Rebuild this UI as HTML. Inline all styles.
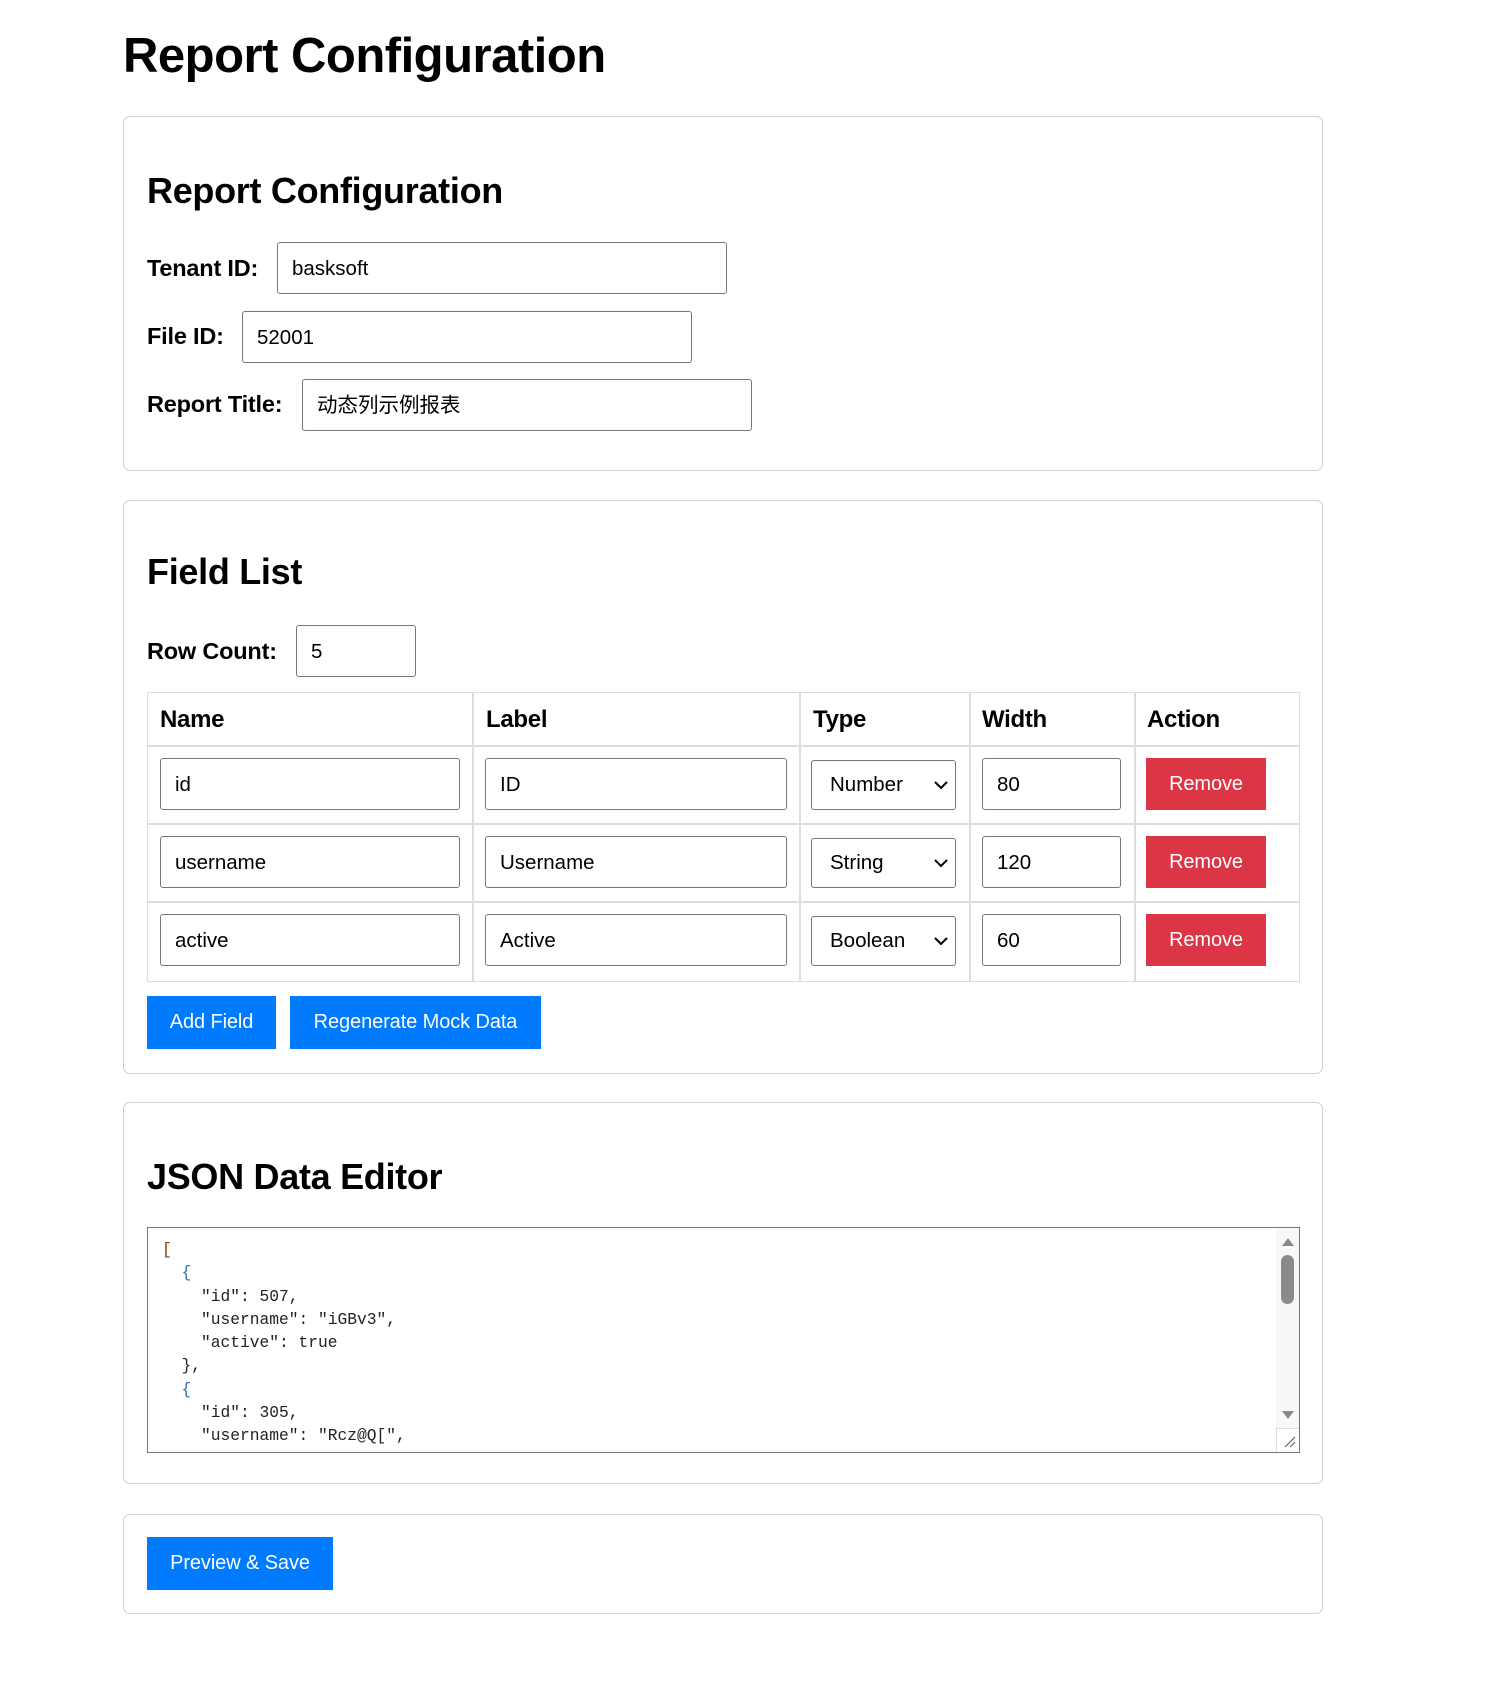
<!DOCTYPE html>
<html><head><meta charset="utf-8"><style>
*{box-sizing:border-box;margin:0;padding:0}
body{width:1493px;height:1707px;background:#fff;position:relative;font-family:"Liberation Sans","Noto Sans CJK SC",sans-serif;color:#000;overflow:hidden}
.a{position:absolute}
.h1{font-size:49px;font-weight:bold;left:123px;top:28px;line-height:56px;letter-spacing:-0.5px}
.card{position:absolute;left:123px;width:1200px;border:1.5px solid #d0d0d0;border-radius:7px}
.h2{position:absolute;left:147px;font-size:36px;font-weight:bold;line-height:40px;letter-spacing:-0.3px}
.lbl{position:absolute;left:147px;font-size:23.5px;font-weight:bold;line-height:28px;letter-spacing:-0.2px}
.in{position:absolute;border:1.5px solid #767676;border-radius:3px;font-size:20.5px;line-height:26px;padding:13px 14px 11px;height:52px;background:#fff}
.th{position:absolute;font-size:24px;font-weight:bold;line-height:28px;letter-spacing:-0.3px}
.hl{position:absolute;background:#ddd}
.btn{position:absolute;color:#fff;font-size:20px;text-align:center;line-height:53px;height:53px;letter-spacing:-0.1px}
.blue{background:#007bff}.red{background:#dc3545;height:52px;line-height:52px;width:120px}
.sel{position:absolute;border:1.5px solid #767676;border-radius:3px;width:145px;height:50px;font-size:20.5px;line-height:24px;padding:12px 18px}
.sel svg{position:absolute;right:7px;top:19px}
pre{position:absolute;left:14px;top:10px;font-family:"Liberation Mono",monospace;font-size:16.25px;line-height:23.3px;color:#222}
</style></head><body>
<div class="a h1">Report Configuration</div>

<div class="card" style="top:116px;height:355px"></div>
<div class="h2" style="top:171px">Report Configuration</div>
<div class="lbl" style="top:254px">Tenant ID:</div>
<div class="in" style="left:277px;top:242px;width:450px">basksoft</div>
<div class="lbl" style="top:322px">File ID:</div>
<div class="in" style="left:242px;top:311px;width:450px">52001</div>
<div class="lbl" style="top:390px">Report Title:</div>
<div class="in" style="left:302px;top:379px;width:450px">动态列示例报表</div>

<div class="card" style="top:500px;height:574px"></div>
<div class="h2" style="top:552px">Field List</div>
<div class="lbl" style="top:637px">Row Count:</div>
<div class="in" style="left:296px;top:625px;width:120px">5</div>

<div class="a" style="left:147px;top:692px;width:1153px;height:290px;border:1.5px solid #ddd"></div>
<div class="hl" style="left:147px;top:745px;width:1153px;height:1.5px"></div>
<div class="hl" style="left:147px;top:823px;width:1153px;height:1.5px"></div>
<div class="hl" style="left:147px;top:901px;width:1153px;height:1.5px"></div>
<div class="hl" style="left:472px;top:692px;width:1.5px;height:290px"></div>
<div class="hl" style="left:799px;top:692px;width:1.5px;height:290px"></div>
<div class="hl" style="left:969px;top:692px;width:1.5px;height:290px"></div>
<div class="hl" style="left:1134px;top:692px;width:1.5px;height:290px"></div>
<div class="th" style="left:160px;top:706px">Name</div>
<div class="th" style="left:486px;top:706px">Label</div>
<div class="th" style="left:813px;top:706px">Type</div>
<div class="th" style="left:982px;top:706px">Width</div>
<div class="th" style="left:1147px;top:706px">Action</div>

<div class="in" style="left:160px;top:758px;width:300px">id</div>
<div class="in" style="left:485px;top:758px;width:302px">ID</div>
<div class="sel" style="left:811px;top:760px">Number<svg width="14" height="10"><path d="M1 2l6 6 6-6" stroke="#000" stroke-width="2" fill="none"/></svg></div>
<div class="in" style="left:982px;top:758px;width:139px">80</div>
<div class="btn red" style="left:1146px;top:758px">Remove</div>

<div class="in" style="left:160px;top:836px;width:300px">username</div>
<div class="in" style="left:485px;top:836px;width:302px">Username</div>
<div class="sel" style="left:811px;top:838px">String<svg width="14" height="10"><path d="M1 2l6 6 6-6" stroke="#000" stroke-width="2" fill="none"/></svg></div>
<div class="in" style="left:982px;top:836px;width:139px">120</div>
<div class="btn red" style="left:1146px;top:836px">Remove</div>

<div class="in" style="left:160px;top:914px;width:300px">active</div>
<div class="in" style="left:485px;top:914px;width:302px">Active</div>
<div class="sel" style="left:811px;top:916px">Boolean<svg width="14" height="10"><path d="M1 2l6 6 6-6" stroke="#000" stroke-width="2" fill="none"/></svg></div>
<div class="in" style="left:982px;top:914px;width:139px">60</div>
<div class="btn red" style="left:1146px;top:914px">Remove</div>

<div class="btn blue" style="left:147px;top:996px;width:129px">Add Field</div>
<div class="btn blue" style="left:290px;top:996px;width:251px">Regenerate Mock Data</div>

<div class="card" style="top:1102px;height:382px"></div>
<div class="h2" style="top:1157px">JSON Data Editor</div>
<div class="a" style="left:147px;top:1227px;width:1153px;height:226px;border:1.5px solid #767676;overflow:hidden;background:#fff">
<pre><span style="color:#8a3a00">[</span>
  <span style="color:#2a6fb0">{</span>
    "id": 507,
    "username": "iGBv3",
    "active": true
  },
  <span style="color:#2a6fb0">{</span>
    "id": 305,
    "username": "Rcz@Q[",
    "active": false</pre>
<div class="a" style="left:1128px;top:0;width:23px;height:224px;background:#f8f8f8"></div>
<div class="a" style="left:1133px;top:27px;width:13px;height:49px;background:#8a8a8a;border-radius:7px"></div>
<svg class="a" style="left:1134px;top:10px" width="12" height="8"><path d="M6 0L12 8H0z" fill="#8a8a8a"/></svg>
<svg class="a" style="left:1134px;top:183px" width="12" height="8"><path d="M0 0H12L6 8z" fill="#8a8a8a"/></svg>
<div class="a" style="left:1128px;top:200px;width:23px;height:24px;border-left:1px solid #ddd;border-top:1px solid #ddd;background:#fff"></div>
<svg class="a" style="left:1136px;top:208px" width="12" height="12"><path d="M1 11L11 1M6 11L11 6" stroke="#666" stroke-width="1.2"/></svg>
</div>

<div class="card" style="top:1514px;height:100px"></div>
<div class="btn blue" style="left:147px;top:1537px;width:186px">Preview &amp; Save</div>
</body></html>
